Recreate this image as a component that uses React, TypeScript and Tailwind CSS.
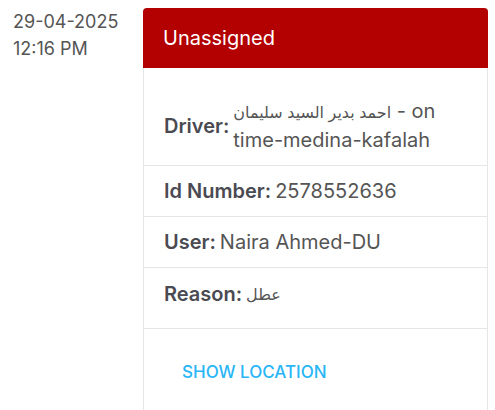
export default function App() {
  const rows = [
    {
      label: "Driver:",
      value: (
        <>
          <span className="text-[16px]">احمد بدير السيد سليمان</span> - on
          time-medina-kafalah
        </>
      ),
    },
    { label: "Id Number:", value: "2578552636" },
    { label: "User:", value: "Naira Ahmed-DU" },
    { label: "Reason:", value: <span className="text-[16px]">عطل</span> },
  ];

  return (
    <div
      className="flex min-h-[410px] bg-white pt-[7px] pl-[13px] pr-[7px]"
      style={{ fontFamily: "Inter, 'DejaVu Sans', sans-serif" }}
    >
      <div className="w-[130px] shrink-0 pt-px text-[18px] leading-[27px] text-[#555555]">
        <div>29-04-2025</div>
        <div>12:16 PM</div>
      </div>

      <div className="mt-px flex-1 rounded-t-[4px] border-x border-[#e6e6e6]">
        <div className="-mx-px flex h-[60px] items-center rounded-t-[4px] bg-[#b30000] px-5 text-[20px] text-white">
          Unassigned
        </div>
        <div className="pt-[18px] pb-[9px]">
          {rows.map((r, i) => (
            <div
              key={r.label}
              className={`flex items-center gap-1 px-5 py-[11px] text-[20px] leading-[28px] ${
                i < rows.length - 1 ? "border-b border-[#e6e6e6]" : ""
              }`}
            >
              <span className="shrink-0 font-semibold text-[#4a4a52]">
                {r.label}
              </span>
              <span className="text-[#555555]">{r.value}</span>
            </div>
          ))}
        </div>
        <div className="border-t border-[#e6e6e6] px-5 pt-[31px] pb-6">
          <button
            type="button"
            className="px-[18px] text-[17px] leading-[24px] font-medium uppercase text-[#29b6f6]"
          >
            Show Location
          </button>
        </div>
      </div>
    </div>
  );
}
